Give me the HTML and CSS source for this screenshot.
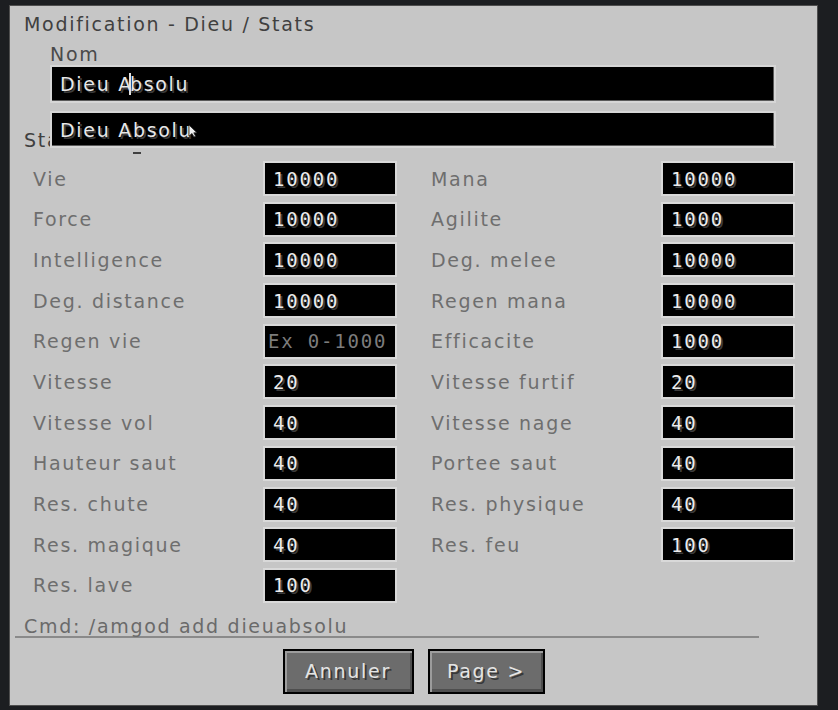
FILE: index.html
```html
<!DOCTYPE html>
<html lang="fr">
<head>
    <meta charset="UTF-8">
    <title>Modification - Dieu / Stats</title>
    <link rel="stylesheet" href="styles.css">
</head>
<body>
    <div class="panneau">
        <div class="titre">Modification - Dieu / Stats</div>

        <div class="nom-label">Nom</div>
        <div class="champ-nom">Dieu A<span class="curseur"></span>bsolu</div>

        <div class="section">Stats<span class="tiret"></span></div>

        <!-- liste de suggestions sous le champ Nom -->
        <div class="suggestion">
            Dieu Absolu
            <svg class="souris" width="10" height="14" viewBox="0 0 10 14">
                <path d="M1 1 L1 12 L4 9.5 L6 13 L7.6 12.2 L5.8 8.8 L9 8.8 Z" fill="#f0f0f0" stroke="#202020" stroke-width="0.8"/>
            </svg>
        </div>

        <div class="stats">
            <div class="stat"><label>Vie</label><input type="text" value="10000"></div>
            <div class="stat"><label>Mana</label><input type="text" value="10000"></div>
            <div class="stat"><label>Force</label><input type="text" value="10000"></div>
            <div class="stat"><label>Agilite</label><input type="text" value="1000"></div>
            <div class="stat"><label>Intelligence</label><input type="text" value="10000"></div>
            <div class="stat"><label>Deg. melee</label><input type="text" value="10000"></div>
            <div class="stat"><label>Deg. distance</label><input type="text" value="10000"></div>
            <div class="stat"><label>Regen mana</label><input type="text" value="10000"></div>
            <div class="stat"><label>Regen vie</label><input type="text" class="vide" placeholder="Ex 0-1000"></div>
            <div class="stat"><label>Efficacite</label><input type="text" value="1000"></div>
            <div class="stat"><label>Vitesse</label><input type="text" value="20"></div>
            <div class="stat"><label>Vitesse furtif</label><input type="text" value="20"></div>
            <div class="stat"><label>Vitesse vol</label><input type="text" value="40"></div>
            <div class="stat"><label>Vitesse nage</label><input type="text" value="40"></div>
            <div class="stat"><label>Hauteur saut</label><input type="text" value="40"></div>
            <div class="stat"><label>Portee saut</label><input type="text" value="40"></div>
            <div class="stat"><label>Res. chute</label><input type="text" value="40"></div>
            <div class="stat"><label>Res. physique</label><input type="text" value="40"></div>
            <div class="stat"><label>Res. magique</label><input type="text" value="40"></div>
            <div class="stat"><label>Res. feu</label><input type="text" value="100"></div>
            <div class="stat"><label>Res. lave</label><input type="text" value="100"></div>
        </div>

        <div class="cmd">Cmd: /amgod add dieuabsolu</div>

        <div class="boutons">
            <button class="annuler">Annuler</button>
            <button class="page">Page &gt;</button>
        </div>
    </div>
</body>
</html>
```

FILE: styles.css
```css
body {
    margin: 0;
    padding: 5px 0 0 9px;
    background-color: #1c1e21;
    font-family: "DejaVu Sans", sans-serif;
    font-size: 19px;
    line-height: 20px;
    letter-spacing: 1.7px;
}
.panneau {
    position: relative;
    box-sizing: border-box;
    width: 809px;
    height: 701px;
    background-color: #c6c6c6;
    border: 1px solid #4e4e4e;
}
.titre {
    margin: 8px 0 0 14px;
    color: #404040;
}
.nom-label {
    margin: 10px 0 0 40px;
    color: #4a4a4a;
}
.champ-nom,
.suggestion {
    box-sizing: border-box;
    width: 726px;
    height: 38px;
    margin: 1px 0 0 40px;
    padding-left: 8px;
    display: flex;
    align-items: center;
    background-color: #000;
    border: 2px solid #d6d6d6;
    box-shadow: inset -1px -1px 0 #5a5a5a;
    color: #e8e8e8;
    text-shadow: 2px 2px 0 #3c3c3c;
}
.curseur {
    display: inline-block;
    width: 2px;
    height: 22px;
    margin: 0 -1px 0 -4px;
    background-color: #e0e0e0;
}
.section {
    height: 20px;
    margin: 27px 0 0 14px;
    color: #404040;
}
.tiret {
    display: inline-block;
    width: 8px;
    height: 2px;
    margin-left: 52px;
    vertical-align: -7px;
    background-color: #404040;
}
.suggestion {
    position: absolute;
    top: 105px;
    left: 0;
    height: 37px;
    margin: 0 0 0 40px;
}
.souris {
    position: absolute;
    left: 136px;
    top: 11px;
}
.stats {
    display: grid;
    grid-template-columns: 398px 398px;
    grid-auto-rows: 35px;
    row-gap: 5.7px;
    margin: 11px 0 0 23px;
}
.stat {
    display: flex;
    align-items: center;
}
.stat label {
    width: 230px;
    color: #6e6e6e;
}
.stat input {
    box-sizing: border-box;
    width: 134px;
    height: 35px;
    margin: 0;
    padding: 0 0 0 8px;
    background-color: #000;
    border: 2px solid #d9d9d9;
    outline: none;
    color: #ececec;
    font-family: "DejaVu Sans Mono", monospace;
    font-size: 19px;
    letter-spacing: 1.8px;
    text-shadow: 2px 2px 0 #3c3c3c;
}
.stat input.vide {
    padding-left: 3px;
}
.stat input::placeholder {
    color: #7c7c7c;
    text-shadow: none;
}
.cmd {
    width: 735px;
    margin: 13px 0 0 5px;
    padding-left: 9px;
    color: #6a6a6a;
    border-bottom: 2px solid #8a8a8a;
}
.boutons {
    display: flex;
    justify-content: center;
    gap: 14px;
    margin-top: 11px;
}
button {
    height: 45px;
    border: 2px solid #000;
    background-color: #6c6c6c;
    box-shadow: inset 2px 2px 0 #9c9c9c, inset -2px -3px 0 #4e4e4e;
    color: #e4e4e4;
    font-family: "DejaVu Sans", sans-serif;
    font-size: 19px;
    letter-spacing: 1.7px;
    text-shadow: 2px 2px 0 #383838;
    cursor: pointer;
}
.annuler {
    width: 131px;
}
.page {
    width: 117px;
}
```
